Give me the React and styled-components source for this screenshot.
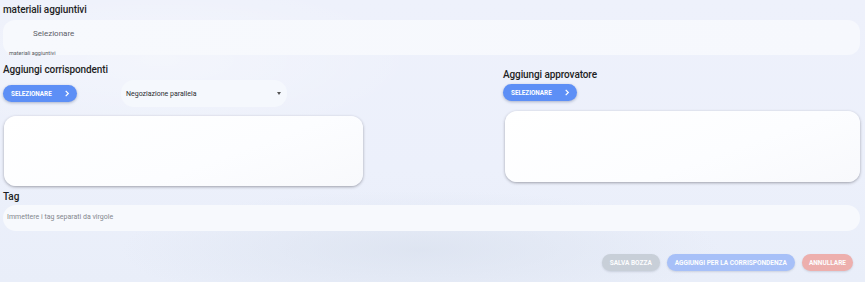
import React from "react";
import styled, { createGlobalStyle } from "styled-components";

const Global = createGlobalStyle`
  html, body { margin: 0; padding: 0; }
  body {
    font-family: Roboto, "Liberation Sans", sans-serif;
    background: #edf1fb;
  }
`;

const Page = styled.div`
  width: 865px;
  height: 282px;
  box-sizing: border-box;
  padding: 3px 5px 0 3px;
  overflow: hidden;
  background:
    radial-gradient(ellipse 300px 60px at 420px 250px, rgba(214, 222, 236, 0.6), transparent),
    radial-gradient(ellipse 260px 80px at 160px 60px, rgba(255, 255, 255, 0.35), transparent),
    linear-gradient(180deg, #eef1fb 0%, #ecf0fb 60%, #e9eef9 100%);
`;

const Title = styled.div`
  font-size: 10px;
  font-weight: 500;
  color: #1e1f24;
  line-height: 14px;
  margin-top: ${(p) => p.$mt || 0}px;
  letter-spacing: -0.1px;
`;

const FileField = styled.div`
  position: relative;
  height: 35px;
  margin-top: 3px;
  border-radius: 12px;
  background: linear-gradient(90deg, #f7f9fd, #f6f8fd);
`;

const FieldText = styled.div`
  padding: 9px 0 0 30px;
  font-size: 8px;
  color: #5c6068;
`;

const FieldLabel = styled.span`
  position: absolute;
  left: 6px;
  bottom: -1px;
  font-size: 5.5px;
  color: #55585e;
`;

const Columns = styled.div`
  display: grid;
  grid-template-columns: 360px 1fr;
  column-gap: 140px;
  margin-top: 8px;
`;

const Column = styled.div`
  display: flex;
  flex-direction: column;
  padding-top: ${(p) => p.$offset || 0}px;
`;

const Controls = styled.div`
  display: flex;
  align-items: center;
  margin-top: ${(p) => p.$mt || 0}px;
`;

const SelectButton = styled.button`
  display: flex;
  align-items: center;
  gap: 12px;
  height: 17px;
  width: 74px;
  box-sizing: border-box;
  padding: 0 0 0 8px;
  border: none;
  border-radius: 9px;
  background: #5d8ff6;
  color: #fff;
  font-family: inherit;
  font-size: 6.3px;
  font-weight: 700;
  box-shadow: 0 1px 3px rgba(40, 60, 110, 0.35);
`;

const Select = styled.div`
  display: flex;
  align-items: center;
  justify-content: space-between;
  margin-left: 44px;
  width: 166px;
  height: 27px;
  box-sizing: border-box;
  padding: 0 6px 0 5px;
  border-radius: 13px;
  background: #f5f8fd;
  font-size: 7px;
  color: #2a2c30;
`;

const Caret = styled.span`
  width: 0;
  height: 0;
  border-left: 2.5px solid transparent;
  border-right: 2.5px solid transparent;
  border-top: 3px solid #555;
`;

const ListBox = styled.div`
  height: ${(p) => p.$h}px;
  margin: ${(p) => p.$mt}px 0 0 ${(p) => p.$ml}px;
  border-radius: 12px;
  background: linear-gradient(160deg, #ffffff 0%, #fcfdff 60%, #f8f9fc 100%);
  box-shadow: 0 1px 3px rgba(60, 60, 70, 0.45);
`;

const TagInput = styled.div`
  height: 26px;
  margin-top: 1px;
  box-sizing: border-box;
  padding: 8px 0 0 4px;
  border-radius: 13px;
  background: #f7f9fd;
  font-size: 7px;
  color: #84878d;
`;

const Footer = styled.div`
  display: flex;
  justify-content: flex-end;
  gap: 7px;
  margin-top: 23px;
  padding-right: 7px;
`;

const FooterButton = styled.button`
  height: 17px;
  padding: 0 ${(p) => p.$px || 7}px;
  border: none;
  border-radius: 9px;
  background: ${(p) => p.$bg};
  color: #fff;
  font-family: inherit;
  font-size: 6.5px;
  font-weight: 700;
  box-shadow: 0 1px 2px rgba(80, 90, 110, 0.2);
  opacity: 0.92;
`;

const Chevron = () => (
  <svg width="6" height="7" viewBox="0 0 6 8">
    <path d="M1.5 1 L4.5 4 L1.5 7" fill="none" stroke="#fff" strokeWidth="1.4" />
  </svg>
);

export default function App() {
  return (
    <Page>
      <Global />
      <Title>materiali aggiuntivi</Title>
      <FileField>
        <FieldText>Selezionare</FieldText>
        <FieldLabel>materiali aggiuntivi</FieldLabel>
      </FileField>
      <Columns>
        <Column>
          <Title>Aggiungi corrispondenti</Title>
          <Controls $mt={3}>
            <SelectButton>
              SELEZIONARE <Chevron />
            </SelectButton>
            <Select>
              Negoziazione parallela
              <Caret />
            </Select>
          </Controls>
          <ListBox $h={70} $mt={9} $ml={1} />
        </Column>
        <Column $offset={5}>
          <Title>Aggiungi approvatore</Title>
          <Controls $mt={2}>
            <SelectButton>
              SELEZIONARE <Chevron />
            </SelectButton>
          </Controls>
          <ListBox $h={71} $mt={10} $ml={2} />
        </Column>
      </Columns>
      <Title $mt={4}>Tag</Title>
      <TagInput>Immettere i tag separati da virgole</TagInput>
      <Footer>
        <FooterButton $bg="#c6cdd6" $px={8}>SALVA BOZZA</FooterButton>
        <FooterButton $bg="#a2bdf8" $px={8}>AGGIUNGI PER LA CORRISPONDENZA</FooterButton>
        <FooterButton $bg="#eeaaa7">ANNULLARE</FooterButton>
      </Footer>
    </Page>
  );
}
